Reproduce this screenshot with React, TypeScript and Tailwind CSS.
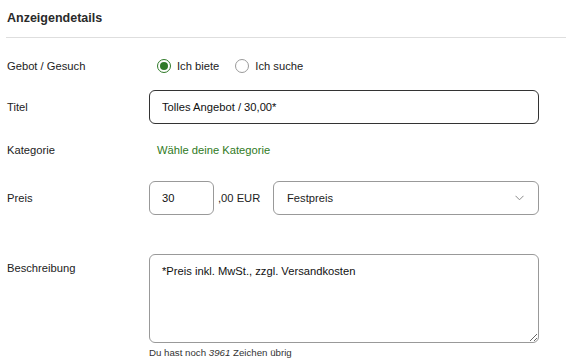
import React from 'react';

const Radio = ({ checked, label }: { checked?: boolean; label: string }) => (
  <label className="flex items-center gap-[6px]">
    <span
      className={`w-[14px] h-[14px] rounded-full border flex items-center justify-center bg-white ${
        checked ? 'border-[#2f7a28]' : 'border-[#9a9a9a]'
      }`}
    >
      {checked && <span className="w-[8px] h-[8px] rounded-full bg-[#2f7a28]" />}
    </span>
    <span>{label}</span>
  </label>
);

const Row = ({
  label,
  className,
  labelClass = '',
  children,
}: {
  label: string;
  className: string;
  labelClass?: string;
  children: React.ReactNode;
}) => (
  <div className={`flex ${className}`}>
    <div className={`w-[142px] shrink-0 ${labelClass}`}>{label}</div>
    <div className="flex-1">{children}</div>
  </div>
);

export default function App() {
  return (
    <div
      className="w-[566px] h-[361px] bg-white text-[#222] text-[11.2px] pl-[6px] overflow-hidden"
      style={{ fontFamily: '"Liberation Sans", Arial, sans-serif' }}
    >
      <div className="h-[38px] flex items-center pl-[1px] border-b border-[#dedede] text-[12.5px] font-bold text-[#2a2a2a]">
        Anzeigendetails
      </div>

      <div className="pl-[1px] pr-[27px]">
        <Row label="Gebot / Gesuch" className="mt-[16px] h-[24px] items-center">
          <div className="flex items-center gap-[16px] pl-[8px]">
            <Radio checked label="Ich biete" />
            <Radio label="Ich suche" />
          </div>
        </Row>

        <Row label="Titel" className="mt-[12px] items-center">
          <input
            defaultValue="Tolles Angebot / 30,00*"
            className="w-full h-[34px] px-[12px] border border-[#333] rounded-[6px] outline-none text-[#111]"
          />
        </Row>

        <Row label="Kategorie" className="mt-[14px] h-[24px] items-center">
          <span className="pl-[8px] text-[#2f7a1d]">Wähle deine Kategorie</span>
        </Row>

        <Row label="Preis" className="mt-[19px] items-center">
          <div className="flex items-center">
            <input
              defaultValue="30"
              className="w-[65px] h-[34px] px-[12px] border border-[#999] rounded-[6px] outline-none text-[#111]"
            />
            <span className="ml-[4px] w-[55px]">,00 EUR</span>
            <div className="flex-1 h-[34px] flex items-center justify-between pl-[13px] pr-[14px] border border-[#999] rounded-[6px]">
              <span>Festpreis</span>
              <svg width="9" height="6" viewBox="0 0 9 6" fill="none" stroke="#8a8a8a" strokeWidth="1">
                <path d="M0.5 0.8 L4.5 4.8 L8.5 0.8" />
              </svg>
            </div>
          </div>
        </Row>

        <Row label="Beschreibung" labelClass="pt-[6px]" className="mt-[39px] items-start">
          <div>
            <textarea
              defaultValue="*Preis inkl. MwSt., zzgl. Versandkosten"
              className="block w-full h-[89px] px-[12px] py-[8px] border border-[#999] rounded-[6px] outline-none text-[#111] resize-y"
            />
            <div className="mt-[3px] text-[9.7px] text-[#333]">
              Du hast noch <i>3961</i> Zeichen übrig
            </div>
          </div>
        </Row>
      </div>
    </div>
  );
}
